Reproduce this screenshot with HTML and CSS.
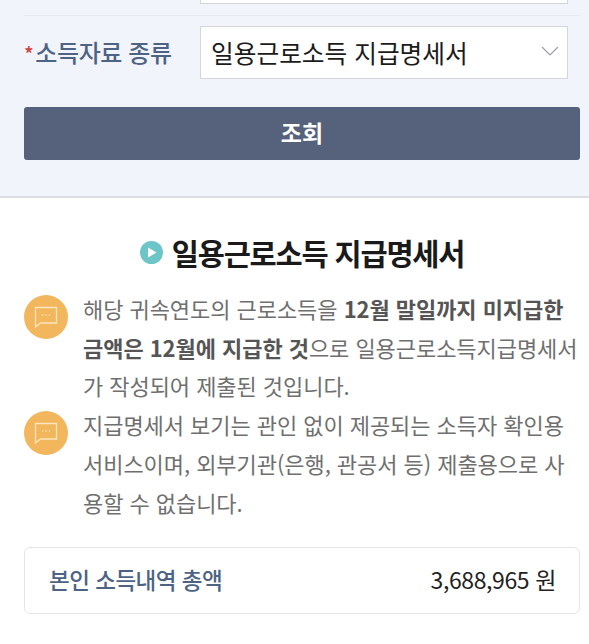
FILE: index.html
```html
<!DOCTYPE html>
<html lang="ko">
<head>
    <meta charset="UTF-8">
    <title>일용근로소득 지급명세서</title>
    <link rel="stylesheet" href="styles.css">
</head>
<body>
    <div class="search-box">
        <div class="cut-input"></div>
        <div class="form-row">
            <label class="form-label"><span class="required">*</span>소득자료 종류</label>
            <div class="select-box">
                <span>일용근로소득 지급명세서</span>
                <svg class="select-arrow" width="18" height="11" viewBox="0 0 18 11">
                    <path d="M1 1l8 8 8-8" fill="none" stroke="#9a9da3" stroke-width="1.1"/>
                </svg>
            </div>
        </div>
        <button class="search-btn">조회</button>
    </div>

    <div class="content">
        <h2 class="title">
            <svg width="23" height="23" viewBox="0 0 23 23">
                <circle cx="11.5" cy="11.5" r="11.5" fill="#6cc5c6"/>
                <path d="M8 6.5v10l8.5-5z" fill="#fff"/>
            </svg>
            일용근로소득 지급명세서
        </h2>

        <div class="notice">
            <div class="notice-icon">
                <svg width="24" height="24" viewBox="0 0 24 24">
                    <path d="M1.500 2.500h21v15.500h-16l-5 4z" fill="none" stroke="#fbe6c0" stroke-width="1.300"/>
                    <circle cx="8.500" cy="10" r=".8" fill="#fbe6c0"/>
                    <circle cx="12" cy="10" r=".8" fill="#fbe6c0"/>
                    <circle cx="15.500" cy="10" r=".8" fill="#fbe6c0"/>
                </svg>
            </div>
            <div class="notice-text">
                <div class="line">해당 귀속연도의 근로소득을 <b>12월 말일까지 미지급한</b></div>
                <div class="line"><b>금액은 12월에 지급한 것</b>으로 일용근로소득지급명세서</div>
                <div class="line">가 작성되어 제출된 것입니다.</div>
            </div>
        </div>
        <div class="notice">
            <div class="notice-icon">
                <svg width="24" height="24" viewBox="0 0 24 24">
                    <path d="M1.500 2.500h21v15.500h-16l-5 4z" fill="none" stroke="#fbe6c0" stroke-width="1.300"/>
                    <circle cx="8.500" cy="10" r=".8" fill="#fbe6c0"/>
                    <circle cx="12" cy="10" r=".8" fill="#fbe6c0"/>
                    <circle cx="15.500" cy="10" r=".8" fill="#fbe6c0"/>
                </svg>
            </div>
            <div class="notice-text">
                <div class="line">지급명세서 보기는 관인 없이 제공되는 소득자 확인용</div>
                <div class="line">서비스이며, 외부기관(은행, 관공서 등) 제출용으로 사</div>
                <div class="line">용할 수 없습니다.</div>
            </div>
        </div>

        <div class="total-box">
            <span class="total-label">본인 소득내역 총액</span>
            <span class="total-value">3,688,965 원</span>
        </div>
    </div>
</body>
</html>
```

FILE: styles.css
```css
body {
    margin: 0;
    background-color: #fff;
    font-family: "Noto Sans CJK KR", "Noto Sans", sans-serif;
    overflow: hidden;
}

.search-box {
    height: 198px;
    box-sizing: border-box;
    padding: 0 9px 0 24px;
    background-color: #f2f4fb;
    border-bottom: 2px solid #dcdde1;
}

.cut-input {
    height: 3px;
    margin: 0 12px 0 176px;
    background-color: #fff;
    border: 1px solid #d3d5da;
    border-top: 0;
}

.form-row {
    display: flex;
    align-items: center;
    justify-content: space-between;
    margin-top: 11px;
    padding: 10px 12px 0 0;
    border-top: 1px solid #e8e9ef;
}

.form-label {
    padding-bottom: 2px;
    font-size: 24px;
    font-weight: 500;
    letter-spacing: -0.4px;
    color: #4d6384;
}

.required {
    margin-right: 2px;
    font-size: 20px;
    color: #d2403f;
}

.select-box {
    display: flex;
    align-items: center;
    justify-content: space-between;
    width: 368px;
    height: 53px;
    box-sizing: border-box;
    padding: 0 8px 2px 10px;
    background-color: #fff;
    border: 1px solid #d3d5da;
    font-size: 24.700px;
    color: #1b1b1b;
}

.search-btn {
    display: block;
    width: 556px;
    height: 53px;
    margin-top: 28px;
    padding: 0 0 4px;
    background-color: #56627c;
    border: 0;
    border-radius: 3px;
    font-family: inherit;
    font-size: 23px;
    font-weight: 700;
    color: #fff;
}

.content {
    padding: 0 9px 0 24px;
}

.title {
    display: flex;
    align-items: center;
    justify-content: center;
    gap: 9px;
    height: 40px;
    margin: 34px 0 17px;
    font-size: 29.500px;
    font-weight: 700;
    letter-spacing: -1.200px;
    color: #1a1a1a;
}

.notice {
    display: flex;
    gap: 16px;
}

.notice-icon {
    display: flex;
    flex: none;
    align-items: center;
    justify-content: center;
    width: 44px;
    height: 44px;
    margin-top: 6px;
    background-color: #f2b65c;
    border-radius: 50%;
}

.notice-text {
    margin-left: -1px;
    font-size: 22px;
    line-height: 38.700px;
    letter-spacing: -0.05px;
    color: #6f6f6f;
    white-space: nowrap;
}

.notice-text b {
    color: #555;
}

.total-box {
    display: flex;
    align-items: center;
    justify-content: space-between;
    width: 556px;
    height: 67px;
    box-sizing: border-box;
    margin-top: 26px;
    padding: 0 23px 4px 24px;
    border: 1px solid #e4e5e8;
    border-radius: 6px;
}

.total-label {
    font-size: 22.500px;
    font-weight: 500;
    letter-spacing: -0.5px;
    color: #4d6384;
}

.total-value {
    font-size: 23px;
    letter-spacing: -0.4px;
    color: #222;
}
```
